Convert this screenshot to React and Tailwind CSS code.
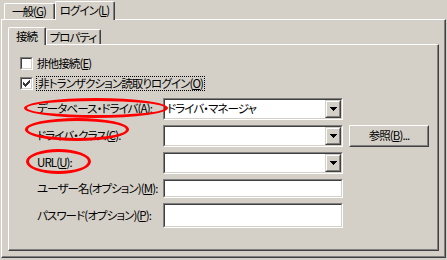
import React from 'react';

const font = "font-['Noto_Sans_CJK_JP',sans-serif] [font-feature-settings:'palt'] text-[11.5px] tracking-[-0.9px] leading-none text-black";

function Acc({ children }) {
  return <span className="underline underline-offset-[1px]">{children}</span>;
}

function Tab({ label, selected, width, small }) {
  const h = selected ? (small ? 'h-[18px] -mb-[1px]' : 'h-[19px] -mb-[1px]') : small ? 'h-[15px]' : 'h-[16px]';
  return (
    <div className={`${width} ${h} relative bg-[#d4d0c8] border-t border-l border-r border-t-white border-l-white border-r-[#404040] rounded-t-[2px] ${selected ? 'z-20' : 'z-0'}`}>
      <div className={`h-full w-full border-r border-r-[#808080] flex justify-center ${selected ? 'pt-[3px]' : 'pt-[2px]'}`}>
        <span className="whitespace-nowrap">{label}</span>
      </div>
    </div>
  );
}

function Sunken({ className, children }) {
  return (
    <div className={`border border-t-[#808080] border-l-[#808080] border-b-white border-r-white ${className}`}>
      <div className="h-full w-full border border-t-[#404040] border-l-[#404040] border-b-[#d4d0c8] border-r-[#d4d0c8] bg-white flex items-center">
        {children}
      </div>
    </div>
  );
}

function Arrow() {
  return (
    <svg width="7" height="4" viewBox="0 0 7 4" shapeRendering="crispEdges">
      <rect x="0" y="0" width="7" height="1" fill="#000" />
      <rect x="1" y="1" width="5" height="1" fill="#000" />
      <rect x="2" y="2" width="3" height="1" fill="#000" />
      <rect x="3" y="3" width="1" height="1" fill="#000" />
    </svg>
  );
}

function Combo({ value }) {
  return (
    <Sunken className="w-[180px] h-[22px]">
      <span className="flex-1 pl-[2px] whitespace-nowrap">{value}</span>
      <div className="w-[16px] h-full border border-t-[#d4d0c8] border-l-[#d4d0c8] border-b-[#404040] border-r-[#404040]">
        <div className="w-full h-full bg-[#d4d0c8] border border-t-white border-l-white border-b-[#808080] border-r-[#808080] flex items-center justify-center">
          <Arrow />
        </div>
      </div>
    </Sunken>
  );
}

function Checkbox({ checked }) {
  return (
    <div className="w-[13px] h-[13px] border border-t-[#808080] border-l-[#808080] border-b-white border-r-white">
      <div className="w-full h-full bg-white border border-t-[#404040] border-l-[#404040] border-b-[#d4d0c8] border-r-[#d4d0c8] flex items-center justify-center">
        {checked && (
          <svg width="7" height="7" viewBox="0 0 7 7" shapeRendering="crispEdges">
            <path d="M0 2v3l2 2 5-5V-1L2 4z" fill="#3a3a3a" />
          </svg>
        )}
      </div>
    </div>
  );
}

function Ellipse({ className }) {
  return <div className={`absolute z-30 pointer-events-none border-[3px] border-[#ff0000] rounded-[50%] ${className}`} />;
}

export default function App() {
  return (
    <div className={`w-[447px] h-[260px] bg-[#d4d0c8] overflow-hidden ${font}`}>
      {/* outer tabs */}
      <div className="flex items-end h-[19px] pl-[4px] relative z-10">
        <Tab label={<>一般(<Acc>G</Acc>)</>} width="w-[51px]" />
        <Tab label={<>ログイン(<Acc>L</Acc>)</>} width="w-[60px]" selected />
      </div>

      {/* outer panel */}
      <div className="ml-[1px] w-[445px] h-[239px] border-t border-l border-r border-b border-t-white border-l-white border-r-[#404040] border-b-[#404040]">
        <div className="w-full h-full border-r border-b border-r-[#808080] border-b-[#808080] pt-[6px] pl-[6px]">
          {/* inner tabs */}
          <div className="flex items-end h-[18px] relative z-10">
            <Tab label="接続" width="w-[38px]" selected small />
            <Tab label="プロパティ" width="w-[55px]" small />
          </div>

          {/* inner panel */}
          <div className="w-[431px] h-[207px] border-t border-l border-r border-b border-t-white border-l-white border-r-[#404040] border-b-[#404040]">
            <div className="w-full h-full border-r border-b border-r-[#808080] border-b-[#808080] flex flex-col">
              <div className="mt-[12px] ml-[11px] h-[13px] flex items-center gap-[4px]">
                <Checkbox />
                <span>排他接続(<Acc>E</Acc>)</span>
              </div>
              <div className="mt-[7px] ml-[11px] h-[13px] flex items-center gap-[3px]">
                <Checkbox checked />
                <span className="border border-dotted border-black px-[1px] py-[1px] whitespace-nowrap">
                  非トランザクション読取りログイン(<Acc>O</Acc>)
                </span>
              </div>

              <div className="mt-[8px] ml-[28px] h-[22px] flex items-center relative">
                <Ellipse className="left-[-13px] top-0 w-[144px] h-[20px]" />
                <span className="w-[126px] whitespace-nowrap">データベース・ドライバ(<Acc>A</Acc>):</span>
                <Combo value="ドライバ・マネージャ" />
              </div>

              <div className="mt-[5px] ml-[28px] h-[22px] flex items-center relative">
                <Ellipse className="left-[-12px] top-[-7px] w-[104px] h-[23px]" />
                <span className="w-[126px] whitespace-nowrap">ドライバ・クラス(<Acc>C</Acc>):</span>
                <Combo value="" />
                <div className="ml-[6px] w-[80px] h-[22px] border border-t-white border-l-white border-b-[#404040] border-r-[#404040]">
                  <div className="w-full h-full border border-t-[#d4d0c8] border-l-[#d4d0c8] border-b-[#808080] border-r-[#808080] flex items-center justify-center">
                    <span className="whitespace-nowrap">参照(<Acc>B</Acc>)...</span>
                  </div>
                </div>
              </div>

              <div className="mt-[5px] ml-[28px] h-[22px] flex items-center relative">
                <Ellipse className="left-[-11px] top-[-3px] w-[65px] h-[25px]" />
                <span className="w-[126px] whitespace-nowrap">URL(<Acc>U</Acc>):</span>
                <Combo value="" />
              </div>

              <div className="mt-[5px] ml-[28px] h-[19px] flex items-center">
                <span className="w-[126px] whitespace-nowrap">ユーザー名(オプション)(<Acc>M</Acc>):</span>
                <Sunken className="w-[180px] h-[19px]" />
              </div>

              <div className="mt-[5px] ml-[28px] h-[25px] flex items-center">
                <span className="w-[126px] whitespace-nowrap">パスワード(オプション)(<Acc>P</Acc>):</span>
                <Sunken className="w-[180px] h-[25px]" />
              </div>
            </div>
          </div>
        </div>
      </div>
    </div>
  );
}
